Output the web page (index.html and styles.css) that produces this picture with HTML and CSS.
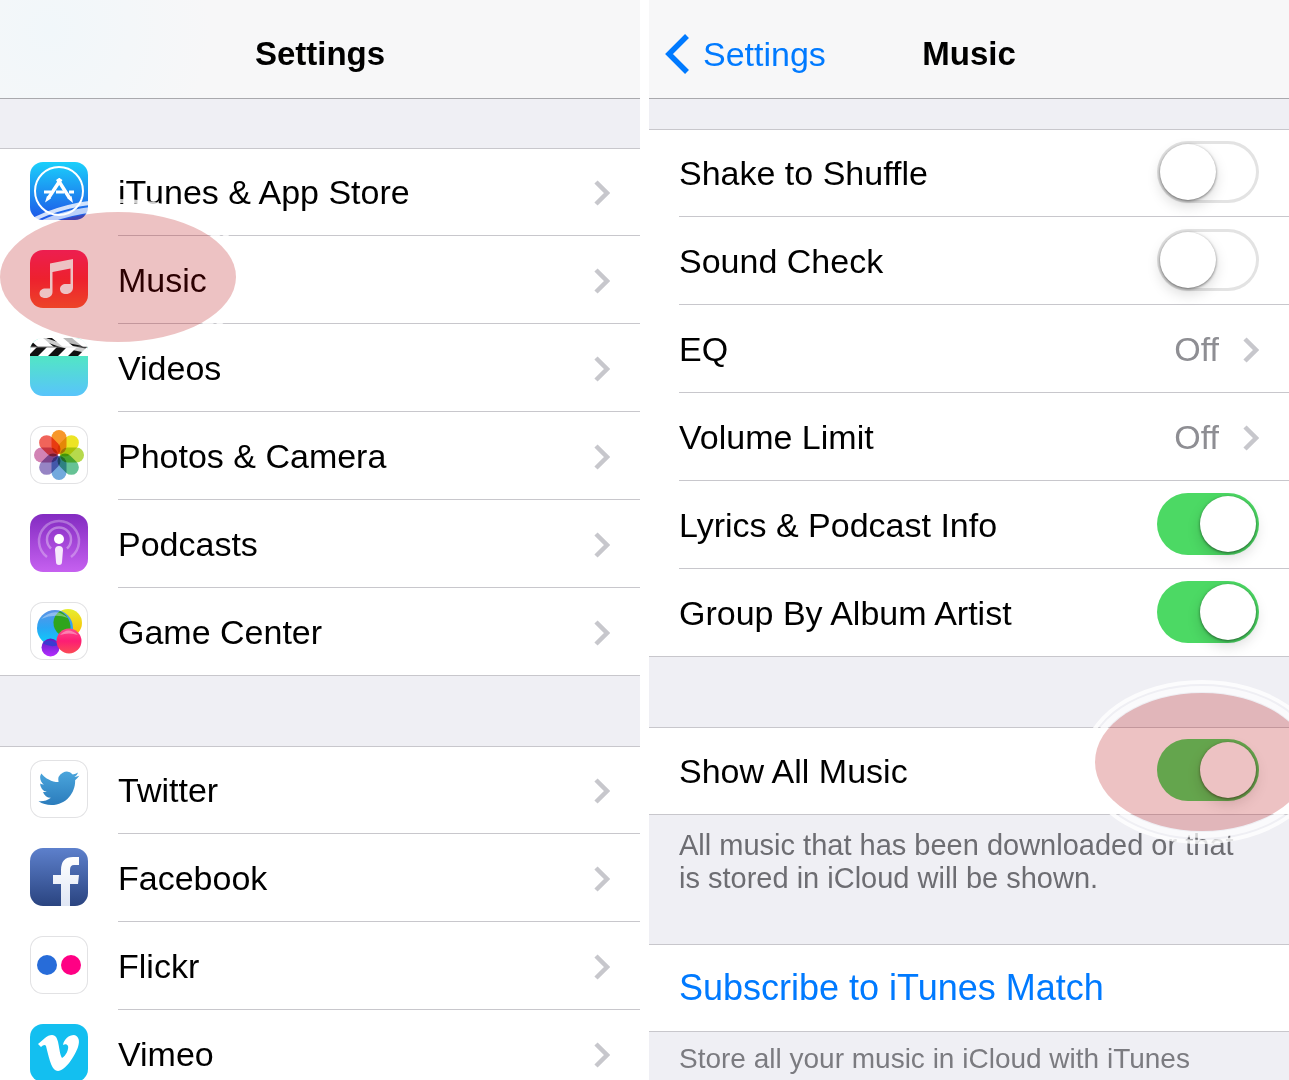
FILE: index.html
```html
<!DOCTYPE html>
<html lang="en">
<head>
<meta charset="utf-8">
<meta name="viewport" content="width=device-width, initial-scale=1">
<title>Settings – Music</title>
<link rel="stylesheet" href="styles.css">
</head>
<body>
<svg class="defs" aria-hidden="true">
  <defs>
    <symbol id="chevron" viewBox="0 0 16 26"><path d="M2 2l11 11L2 24" fill="none" stroke="currentColor" stroke-width="4.500"/></symbol>
    <linearGradient id="g-store" x2="0" y2="1"><stop stop-color="#1bd0fb"/><stop offset="1" stop-color="#1e55e8"/></linearGradient>
    <linearGradient id="g-music" x2="0" y2="1"><stop stop-color="#ff2868"/><stop offset=".5" stop-color="#ff2c3c"/><stop offset="1" stop-color="#ff5a34"/></linearGradient>
    <linearGradient id="g-video" x2="0" y2="1"><stop offset=".3" stop-color="#52e6c4"/><stop offset="1" stop-color="#58c4fb"/></linearGradient>
    <linearGradient id="g-pod" x2="0" y2="1"><stop stop-color="#832bc1"/><stop offset="1" stop-color="#c661f0"/></linearGradient>
    <linearGradient id="g-bird" x2="0" y2="1"><stop stop-color="#4aa5dc"/><stop offset="1" stop-color="#2b7cbc"/></linearGradient>
    <linearGradient id="g-fb" x2="0" y2="1"><stop stop-color="#5d80cc"/><stop offset="1" stop-color="#2a4480"/></linearGradient>
    <linearGradient id="g-f" x2="0" y2="1"><stop stop-color="#fff"/><stop offset="1" stop-color="#dfe6f4"/></linearGradient>
    <linearGradient id="g-blue" x2="0" y2="1"><stop stop-color="#5c93e6"/><stop offset=".5" stop-color="#2aa6f4"/><stop offset="1" stop-color="#08d3fb"/></linearGradient>
    <linearGradient id="g-yellow" x2="0" y2="1"><stop stop-color="#e6ee30"/><stop offset="1" stop-color="#fdb800"/></linearGradient>
    <linearGradient id="g-pink" x2="0" y2="1"><stop stop-color="#fb4a8c"/><stop offset=".5" stop-color="#fd1d74"/><stop offset="1" stop-color="#fb4b55"/></linearGradient>
    <linearGradient id="g-purple" x2="0" y2="1"><stop stop-color="#5a1ec0"/><stop offset="1" stop-color="#b52cff"/></linearGradient>
  </defs>
</svg>

<main class="screens">
  <section class="screen" aria-labelledby="settings-title">
    <header class="navbar navbar--tinted"><h1 class="navbar__title" id="settings-title">Settings</h1></header>

    <ul class="list list--first-wide">
      <li class="row">
        <svg class="app-icon" viewBox="0 0 58 58" aria-hidden="true">
          <rect width="58" height="58" fill="url(#g-store)"/>
          <circle cx="29" cy="29" r="24" fill="none" stroke="#fff" stroke-width="2"/>
          <path d="M14 30h7M26 30h8M39 30h5" stroke="#fff" stroke-width="3"/>
          <path d="M31 17L18.500 36M27.500 17l12 19" stroke="#fff" stroke-width="3.500"/>
          <path d="M17 34l4 2.500-6 4zM37.500 36.500l4-2.500 1.500 7z" fill="#fff"/>
        </svg>
        <a class="row__body" href="#store"><span class="row__label">iTunes &amp; App Store</span><svg class="chevron" aria-hidden="true"><use href="#chevron"/></svg></a>
      </li>
      <li class="row">
        <svg class="app-icon" viewBox="0 0 58 58" aria-hidden="true">
          <rect width="58" height="58" fill="url(#g-music)"/>
          <path d="M20 13.500L43 9v28.500c0 4-3 6.500-7 6.500-3.500 0-6-2-6-5s2.500-5 6-5h4.500V18.500L22.500 22v20c0 3.500-3 6-7 6-3.500 0-6-1.500-6-4.500s2.500-5 6-5H20z" fill="#fff"/>
        </svg>
        <a class="row__body" href="#music"><span class="row__label">Music</span><svg class="chevron" aria-hidden="true"><use href="#chevron"/></svg></a>
        <span class="highlight highlight--music"></span>
      </li>
      <li class="row">
        <svg class="app-icon" viewBox="0 0 58 58" aria-hidden="true">
          <rect width="58" height="58" fill="url(#g-video)"/>
          <path d="M0 0h58v18H0z" fill="#fff"/>
          <path d="M0 2l8 7H0zM13 0h9l11 9h-9zM33 0h9l11 9h-9zM51 0h7v5zM0 18V16l7-7h10L8 18zM18 18l9-9h10l-9 9zM38 18l9-9h10l-9 9z" fill="#111"/>
          <path d="M0 9h58" stroke="#777" stroke-width="1"/>
        </svg>
        <a class="row__body" href="#videos"><span class="row__label">Videos</span><svg class="chevron" aria-hidden="true"><use href="#chevron"/></svg></a>
      </li>
      <li class="row">
        <svg class="app-icon app-icon--outlined" viewBox="0 0 58 58" aria-hidden="true">
          <g class="petals">
            <rect x="21.500" y="4" width="15" height="24" rx="7.500" fill="#f7972b"/>
            <rect x="21.500" y="4" width="15" height="24" rx="7.500" fill="#ede425" transform="rotate(45 29 29)"/>
            <rect x="21.500" y="4" width="15" height="24" rx="7.500" fill="#b6d94c" transform="rotate(90 29 29)"/>
            <rect x="21.500" y="4" width="15" height="24" rx="7.500" fill="#66c295" transform="rotate(135 29 29)"/>
            <rect x="21.500" y="4" width="15" height="24" rx="7.500" fill="#72a9dd" transform="rotate(180 29 29)"/>
            <rect x="21.500" y="4" width="15" height="24" rx="7.500" fill="#9684c4" transform="rotate(225 29 29)"/>
            <rect x="21.500" y="4" width="15" height="24" rx="7.500" fill="#d283b4" transform="rotate(270 29 29)"/>
            <rect x="21.500" y="4" width="15" height="24" rx="7.500" fill="#f0645a" transform="rotate(315 29 29)"/>
          </g>
        </svg>
        <a class="row__body" href="#photos"><span class="row__label">Photos &amp; Camera</span><svg class="chevron" aria-hidden="true"><use href="#chevron"/></svg></a>
      </li>
      <li class="row">
        <svg class="app-icon" viewBox="0 0 58 58" aria-hidden="true">
          <rect width="58" height="58" fill="url(#g-pod)"/>
          <g fill="none" stroke="#fff" stroke-width="2.500">
            <path d="M17 43A20 20 0 1 1 41 43" opacity=".3"/>
            <path d="M21 34.500A12 12 0 1 1 37 34.500" opacity=".35"/>
          </g>
          <circle cx="29" cy="25" r="5" fill="#fff"/>
          <path d="M25 36q0-4 4-4t4 4l-1 12q0 3-3 3t-3-3z" fill="#f6e9fc"/>
        </svg>
        <a class="row__body" href="#podcasts"><span class="row__label">Podcasts</span><svg class="chevron" aria-hidden="true"><use href="#chevron"/></svg></a>
      </li>
      <li class="row">
        <svg class="app-icon app-icon--outlined" viewBox="0 0 58 58" aria-hidden="true">
          <circle cx="38" cy="21" r="14" fill="url(#g-yellow)"/>
          <circle cx="25" cy="26" r="18" fill="url(#g-blue)"/>
          <path d="M30 9A14 14 0 0 0 29 32Q35 36 38 34.500A18 18 0 0 0 30 9z" fill="#2fa51d"/>
          <circle cx="20.500" cy="45.500" r="9" fill="url(#g-purple)"/>
          <path d="M12.500 41Q20 35 29 43Q20 46 12.500 41z" fill="#3a3bd0"/>
          <circle cx="39" cy="39" r="12.500" fill="url(#g-pink)"/>
          <path d="M11 17q14-13 27-1q-13-5-27 1zM30 33q8-9 18 0q-9-3-18 0z" fill="#fff" opacity=".35"/>
        </svg>
        <a class="row__body" href="#gamecenter"><span class="row__label">Game Center</span><svg class="chevron" aria-hidden="true"><use href="#chevron"/></svg></a>
      </li>
    </ul>

    <ul class="list">
      <li class="row">
        <svg class="app-icon app-icon--outlined" viewBox="0 0 58 58" aria-hidden="true">
          <path transform="translate(8.500 8) scale(1.700)" fill="url(#g-bird)" d="M23.953 4.570a10 10 0 01-2.825.775 4.958 4.958 0 002.163-2.723c-.951.555-2.005.959-3.127 1.184a4.920 4.920 0 00-8.384 4.482C7.690 8.095 4.067 6.130 1.640 3.162a4.822 4.822 0 00-.666 2.475c0 1.710.870 3.213 2.188 4.096a4.904 4.904 0 01-2.228-.616v.060a4.923 4.923 0 003.946 4.827 4.996 4.996 0 01-2.212.085 4.936 4.936 0 004.604 3.417 9.867 9.867 0 01-6.102 2.105c-.390 0-.779-.023-1.170-.067a13.995 13.995 0 007.557 2.209c9.053 0 13.998-7.496 13.998-13.985 0-.210 0-.420-.015-.630A9.935 9.935 0 0024 4.590z"/>
        </svg>
        <a class="row__body" href="#twitter"><span class="row__label">Twitter</span><svg class="chevron" aria-hidden="true"><use href="#chevron"/></svg></a>
      </li>
      <li class="row">
        <svg class="app-icon" viewBox="0 0 58 58" aria-hidden="true">
          <rect width="58" height="58" fill="url(#g-fb)"/>
          <path d="M31 58V36h-8v-9h8v-5q0-13 12-13h6v8h-5q-4 0-4 5v5h9l-1 9h-8v22z" fill="url(#g-f)"/>
        </svg>
        <a class="row__body" href="#facebook"><span class="row__label">Facebook</span><svg class="chevron" aria-hidden="true"><use href="#chevron"/></svg></a>
      </li>
      <li class="row">
        <svg class="app-icon app-icon--outlined" viewBox="0 0 58 58" aria-hidden="true">
          <circle cx="17" cy="29" r="10" fill="#276cd9"/><circle cx="41" cy="29" r="10" fill="#ff0084"/>
        </svg>
        <a class="row__body" href="#flickr"><span class="row__label">Flickr</span><svg class="chevron" aria-hidden="true"><use href="#chevron"/></svg></a>
      </li>
      <li class="row">
        <svg class="app-icon" viewBox="0 0 58 58" aria-hidden="true">
          <rect width="58" height="58" fill="#13bff0"/>
          <path d="M8 20C13 16 17 11 22 11c8 0 6 16 10 23 4-2 7-9 6-12-1-2-3-2-5-1 1-6 6-10 11-10 5 1 6 6 4 12-3 9-13 24-20 24-6 0-8-9-12-25-1-2-3-1-5 1z" fill="#fff"/>
        </svg>
        <a class="row__body" href="#vimeo"><span class="row__label">Vimeo</span><svg class="chevron" aria-hidden="true"><use href="#chevron"/></svg></a>
      </li>
    </ul>
  </section>

  <section class="screen" aria-labelledby="music-title">
    <header class="navbar">
      <a class="navbar__back" href="#settings"><svg class="navbar__arrow" viewBox="0 0 24 40" aria-hidden="true"><path d="M22 2L4 20l18 18" fill="none" stroke="currentColor" stroke-width="5.500"/></svg>Settings</a>
      <h1 class="navbar__title" id="music-title">Music</h1>
    </header>

    <ul class="list list--first">
      <li class="row"><div class="row__body"><label class="row__label" for="shake">Shake to Shuffle</label><input class="switch" type="checkbox" role="switch" id="shake"></div></li>
      <li class="row"><div class="row__body"><label class="row__label" for="sound">Sound Check</label><input class="switch" type="checkbox" role="switch" id="sound"></div></li>
      <li class="row"><a class="row__body" href="#eq"><span class="row__label">EQ</span><span class="row__value">Off</span><svg class="chevron" aria-hidden="true"><use href="#chevron"/></svg></a></li>
      <li class="row"><a class="row__body" href="#volume"><span class="row__label">Volume Limit</span><span class="row__value">Off</span><svg class="chevron" aria-hidden="true"><use href="#chevron"/></svg></a></li>
      <li class="row"><div class="row__body"><label class="row__label" for="lyrics">Lyrics &amp; Podcast Info</label><input class="switch" type="checkbox" role="switch" id="lyrics" checked></div></li>
      <li class="row"><div class="row__body"><label class="row__label" for="group">Group By Album Artist</label><input class="switch" type="checkbox" role="switch" id="group" checked></div></li>
    </ul>

    <ul class="list">
      <li class="row">
        <div class="row__body"><label class="row__label" for="showall">Show All Music</label><input class="switch" type="checkbox" role="switch" id="showall" checked></div>
        <span class="highlight highlight--switch"></span>
      </li>
    </ul>
    <p class="note">All music that has been downloaded or that is stored in iCloud will be shown.</p>

    <ul class="list list--after-note">
      <li class="row"><a class="row__body row__body--action" href="#match">Subscribe to iTunes Match</a></li>
    </ul>
    <p class="note note--compact">Store all your music in iCloud with iTunes</p>
  </section>
</main>
</body>
</html>
```
FILE: styles.css
```css
* {
  box-sizing: border-box;
}

body {
  margin: 0;
  background: #fff;
  color: #000;
  font-family: "Liberation Sans", Arial, sans-serif;
  font-size: 34px;
  line-height: 40px;
}

a {
  color: inherit;
  text-decoration: none;
}

.defs {
  position: absolute;
  width: 0;
  height: 0;
}

.screens {
  display: grid;
  grid-template-columns: 1fr 1fr;
  gap: 9px;
  height: 100vh;
}

.screen {
  min-width: 0;
  overflow: hidden;
  background: #efeff4;
}

/* Navigation bar */
.navbar {
  display: grid;
  grid-template-columns: 1fr auto 1fr;
  align-items: center;
  height: 99px;
  padding: 10px 16px 0;
  border-bottom: 1px solid #a9a9ad;
  background: #f7f7f8;
}

.navbar--tinted {
  background: radial-gradient(circle at 50px 30px, #f1f7fa, #f7f7f8 160px);
}

.navbar__title {
  grid-column: 2;
  margin: 0;
  font-size: 33px;
  font-weight: bold;
}

.navbar__back {
  display: flex;
  align-items: center;
  gap: 14px;
  color: #007aff;
}

.navbar__arrow {
  width: 24px;
  height: 40px;
}

/* Grouped lists */
.list {
  margin: 70px 0 0;
  padding: 0;
  list-style: none;
  background: #fff;
  box-shadow: inset 0 1px #c8c7cc, inset 0 -1px #c8c7cc;
}

.list--first {
  margin-top: 30px;
}

.list--first-wide {
  margin-top: 49px;
}

.list--after-note {
  margin-top: 49px;
}

.row {
  position: relative;
  display: flex;
  align-items: center;
  gap: 30px;
  padding-left: 30px;
}

.row__body {
  flex: 1;
  display: flex;
  align-items: center;
  gap: 24px;
  min-width: 0;
  height: 88px;
  padding-right: 30px;
  border-bottom: 1px solid #c8c7cc;
}

.row:last-child .row__body {
  border-bottom-color: transparent;
}

.row__body--action {
  color: #007aff;
  font-size: 36px;
}

.row__label {
  flex: 1;
}

.row__value {
  color: #8e8e93;
}

.chevron {
  width: 16px;
  height: 26px;
  margin-top: 2px;
  color: #c7c7cc;
}

.app-icon {
  width: 58px;
  height: 58px;
  margin-bottom: 2px;
  border-radius: 13px;
}

.app-icon--outlined {
  box-shadow: inset 0 0 0 1px #e2e2e4;
}

.petals {
  isolation: isolate;
}

.petals rect {
  mix-blend-mode: multiply;
}

/* Switch */
.switch {
  appearance: none;
  display: flex;
  width: 102px;
  height: 62px;
  margin: 0 0 2px;
  padding: 3px;
  border-radius: 31px;
  background: #fff;
  box-shadow: inset 0 0 0 3px #e3e3e3;
}

.switch::before {
  content: "";
  width: 56px;
  height: 56px;
  border-radius: 50%;
  background: #fff;
  box-shadow: 0 1px 3px rgba(0, 0, 0, 0.5), 0 6px 14px rgba(0, 0, 0, 0.15);
}

.switch:checked {
  justify-content: flex-end;
  background: #4cd964;
  box-shadow: none;
}

.note {
  margin: 0;
  padding: 14px 30px 0;
  color: #6d6d72;
  font-size: 29px;
  line-height: 33px;
}

.note--compact {
  padding-top: 10px;
  color: #7b7b80;
  font-size: 28px;
}

/* Marker ovals with their double white halo */
.highlight {
  position: absolute;
  z-index: 1;
  border-radius: 50%;
  background: rgba(180, 0, 5, 0.24);
  pointer-events: none;
}

.highlight::before,
.highlight::after {
  content: "";
  position: absolute;
  border-radius: 50%;
}

.highlight::before {
  inset: -7px;
  border: 6px solid rgba(255, 255, 255, 0.7);
}

.highlight::after {
  inset: -13px;
  border: 4px solid rgba(255, 255, 255, 0.8);
}

.highlight--music {
  top: -24px;
  left: 0;
  width: 236px;
  height: 130px;
}

.highlight--switch {
  top: -34px;
  right: -20px;
  width: 214px;
  height: 138px;
}
```
